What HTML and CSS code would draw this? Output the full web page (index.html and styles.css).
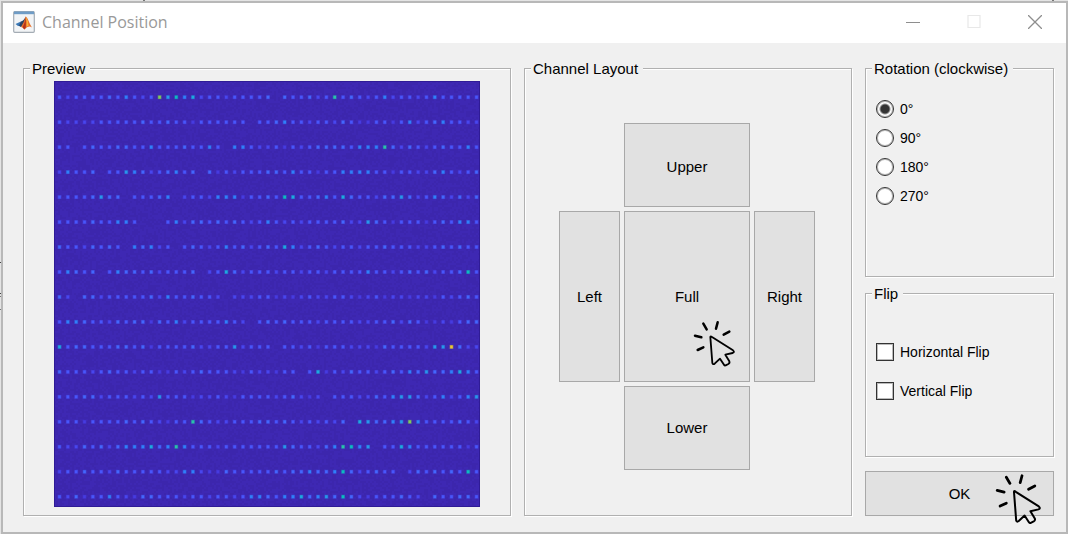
FILE: index.html
```html
<!DOCTYPE html>
<html lang="en">
<head>
<meta charset="utf-8">
<title>Channel Position</title>
<link rel="stylesheet" href="styles.css">
</head>
<body>
<svg class="sprites" aria-hidden="true">
  <symbol id="click" viewBox="0 0 126 144">
    <g fill="none" stroke="#000" stroke-linejoin="round" stroke-linecap="round">
      <path stroke-width="7.5" d="M31 11l10 17M74 7l-5 19M92 44l17-9M6 47l19 5M14 90l17-8"/>
      <path stroke-width="5.5" d="M52 51Q52 47 57 51L120 91Q126 96 119 99L97 104L109 124Q111 129 106 132L98 136Q95 138 92 133L81 116L65 131Q60 135 58 129Z"/>
    </g>
  </symbol>
</svg>
<main class="window">
  <header class="titlebar">
    <svg class="app-icon" viewBox="0 0 22 22" aria-hidden="true">
      <rect x=".7" y=".7" width="20.6" height="20.6" rx="1" fill="#f2f4f6" stroke="#a4acb4" stroke-width="1.2"/>
      <path d="M1 .5h20v2.700H1z" fill="#6f9cc6"/>
      <path d="M2.500 13L8 10.500L11 12.200L8 16Q6.500 14.500 5 15Z" fill="#3b78b5"/>
      <path d="M8 10.500Q10.500 10 12.800 5.500L11.500 12.500L8 16Q7 15 6 14.800Z" fill="#2b4466"/>
      <path d="M8 16Q11 11.500 12.800 5.500C15 7 16.500 13 19 16.500Q15.500 13.500 11.500 18.500Q10 16 8 16Z" fill="#e8702a"/>
      <path d="M12.800 5.500C12.300 10 11 14 9.500 16.300L11.300 18.500Q12 17.500 12.800 16.500Z" fill="#b5331d"/>
      <path d="M12.800 5.500Q14 11 13.600 15.700L15.600 14.700Q15.200 9 12.800 5.500Z" fill="#f8b23c"/>
    </svg>
    <h1 class="title">Channel Position</h1>
    <button class="caption" type="button" aria-label="Minimize"><svg viewBox="0 0 14 14"><path d="M0 7.500h14" stroke="#8e8e8e" stroke-width="1"/></svg></button>
    <button class="caption" type="button" aria-label="Maximize" disabled><svg viewBox="0 0 14 14"><path d="M1 .500h12v12H1z" fill="none" stroke="#e8e8e8" stroke-width="1.200"/></svg></button>
    <button class="caption" type="button" aria-label="Close"><svg viewBox="0 0 14 14"><path d="M0 0l14 14M14 0L0 14" stroke="#8e8e8e" stroke-width="1.300"/></svg></button>
  </header>
  <form class="client">
    <fieldset class="group">
      <legend>Preview</legend>
      <canvas class="preview" id="preview" width="426" height="426" role="img" aria-label="Channel preview"></canvas>
    </fieldset>
    <fieldset class="group layout-group">
      <legend>Channel Layout</legend>
      <div class="pad">
        <button class="push upper" type="button">Upper</button>
        <button class="push left" type="button">Left</button>
        <button class="push full" type="button">Full<svg class="pointer"><use href="#click"/></svg></button>
        <button class="push right" type="button">Right</button>
        <button class="push lower" type="button">Lower</button>
      </div>
    </fieldset>
    <div class="side">
      <fieldset class="group">
        <legend>Rotation (clockwise)</legend>
        <div class="options rotation">
          <label class="option"><input type="radio" name="rotation" checked>0°</label>
          <label class="option"><input type="radio" name="rotation">90°</label>
          <label class="option"><input type="radio" name="rotation">180°</label>
          <label class="option"><input type="radio" name="rotation">270°</label>
        </div>
      </fieldset>
      <fieldset class="group">
        <legend>Flip</legend>
        <div class="options flip">
          <label class="option"><input type="checkbox">Horizontal Flip</label>
          <label class="option"><input type="checkbox">Vertical Flip</label>
        </div>
      </fieldset>
      <button class="push ok" type="button">OK<svg class="pointer large"><use href="#click"/></svg></button>
    </div>
  </form>
</main>
<script src="preview.js"></script>
</body>
</html>
```
FILE: styles.css
```css
* { box-sizing: border-box; }

body {
  margin: 0;
  padding: 1px 0 0 1px;
  min-height: 100vh;
  display: flex;
  background:
    linear-gradient(#777, #777) 143px 0 / 2px 1px no-repeat,
    linear-gradient(#777, #777) 1052px 0 / 2px 1px no-repeat,
    linear-gradient(#444, #444) 0 262px / 1px 1px no-repeat,
    linear-gradient(#444, #444) 0 293px / 1px 1px no-repeat,
    linear-gradient(#777, #777) 0 296px / 1px 1px no-repeat,
    linear-gradient(#777, #777) 0 309px / 1px 1px no-repeat,
    #e4e4e4;
  color: #000;
  font: 14px/16px "Liberation Sans", Arial, sans-serif;
}

button, input { font: inherit; color: inherit; margin: 0; }

.sprites { position: absolute; width: 0; height: 0; }

.window {
  flex: 1;
  display: flex;
  flex-direction: column;
  border: 2px solid #b8b8b8;
  background: #f0f0f0;
}

.titlebar {
  display: flex;
  align-items: center;
  height: 40px;
  padding: 0 1px 2px 10px;
  background: #fff;
}

.app-icon { width: 22px; height: 22px; }

.title {
  flex: 1;
  margin: 0 0 0 7px;
  color: #999;
  font: 16px/20px "Open Sans", "Noto Sans", sans-serif;
}

.caption {
  width: 61px;
  height: 38px;
  padding: 0;
  border: 0;
  background: none;
}

.caption svg { display: block; width: 14px; height: 14px; margin: auto; }

.client {
  flex: 1;
  display: grid;
  grid-template-columns: 488fr 328fr 189fr;
  gap: 13px;
  padding: 16px 12px 16px 20px;
}

.group {
  min-width: 0;
  margin: 0;
  padding: 0;
  border: 1px solid #b0b0b0;
  box-shadow: 1px 1px 0 #fff, inset 1px 1px 0 #fff;
}

.group legend {
  margin-left: 6px;
  padding: 2px 5px 0 2px;
  background: #f0f0f0;
  font-size: 15px;
}

.preview {
  display: block;
  width: calc(100% - 60px);
  aspect-ratio: 1;
  margin: 4px auto 0 30px;
}

.layout-group { padding: 46px 2px 0 0; }

.pad {
  display: grid;
  grid-template: "a upper b" 84px "left full right" 171px "c lower d" 84px / 61px 126px 61px;
  gap: 4px;
  justify-content: center;
}

.upper { grid-area: upper; }
.left { grid-area: left; }
.full { grid-area: full; }
.right { grid-area: right; }
.lower { grid-area: lower; }

.push {
  position: relative;
  padding: 0;
  border: 1px solid #a8a8a8;
  background: #e1e1e1;
  font-size: 15px;
}

.upper { padding-top: 3px; }

.pointer {
  position: absolute;
  right: 14px;
  bottom: 13px;
  width: 42px;
  height: 48px;
}

.pointer.large {
  top: 1px;
  right: 12px;
  width: 46px;
  height: 53px;
}

.side {
  display: grid;
  grid-template-rows: 218fr 173fr 52px;
  gap: 7px;
}

.ok { margin-top: 7px; }

.options { display: flex; flex-direction: column; padding-left: 10px; }
.rotation { gap: 11px; padding-top: 23px; }
.flip { gap: 21px; padding-top: 41px; }

.option { display: flex; align-items: center; gap: 6px; height: 18px; }

.option input {
  appearance: none;
  width: 18px;
  height: 18px;
  border: 1px solid #333;
  background: #fff;
  box-shadow: inset 0 0 0 1px #bbb;
}

.option input[type="radio"] { border-radius: 50%; }

.option input[type="radio"]:checked {
  background: radial-gradient(circle, #333 4px, #fff 6px);
}
```
FILE: preview.js
```js
// Brightness of each spot, one character per column: 0 is an empty site, B the brightest.
const rows = [
  "323333435323A68572332333340433423934323523323533333",
  "322223333343343313333330334533233243113313523453322",
  "330343344335333433530553223132344443555942432343353",
  "253340336542345340413233344353313355553313322453234",
  "333346440333450233255513343873345374332446423542424",
  "333343355300035244343432353232333342264313331343553",
  "433243430545230343235342343752343233233433322343433",
  "354340354434233340237423332332332333353323434233483",
  "420442333334253343320222331212322332123122122132343",
  "355433243441435233335320343433323333223342431121344",
  "73443334434133334223362333033231333222143333266B422",
  "433323433233113234333213221330371324332343546445753",
  "333442333232633312232133332342120333224356642352356",
  "333133334343213394322333443432323240764456A53333432",
  "322434245557459533323333333643324598560337533333313",
  "233433243333322552114333334344544584234330243434383",
  "324133532144333233233235543557456484213334320433443"
];
const palette = ["", "#463be0", "#4846ee", "#4856fb", "#4367fd", "#2f80fa",
  "#2797eb", "#1caadf", "#0cbcc0", "#29c3aa", "#81cc59", "#eaca30"];

const canvas = document.getElementById("preview");
const ctx = canvas.getContext("2d");
ctx.fillStyle = "#3e27b0";
ctx.fillRect(0, 0, canvas.width, canvas.height);

// Faint sensor noise
let seed = 7;
const random = () => (seed = (seed * 16807) % 2147483647) / 2147483647;
for (let y = 0; y < canvas.height; y += 2) {
  for (let x = 0; x < canvas.width; x += 2) {
    ctx.fillStyle = random() < 0.5 ? "rgba(50,30,150,.1)" : "rgba(70,50,205,.1)";
    ctx.fillRect(x, y, 2, 2);
  }
}

rows.forEach((row, j) => {
  [...row].forEach((level, i) => {
    const value = parseInt(level, 16);
    if (!value) return;
    const x = 5.5 + i * 8.34;
    const y = 16.2 + j * 24.97;
    ctx.fillStyle = palette[value];
    ctx.globalAlpha = 0.4;
    ctx.fillRect(x - 2, y - 2, 4, 4);
    ctx.globalAlpha = 1;
    ctx.fillRect(x - 1.3, y - 1.5, 2.6, 3);
  });
});

ctx.strokeStyle = "#2f1b96";
ctx.strokeRect(0.5, 0.5, canvas.width - 1, canvas.height - 1);
```
